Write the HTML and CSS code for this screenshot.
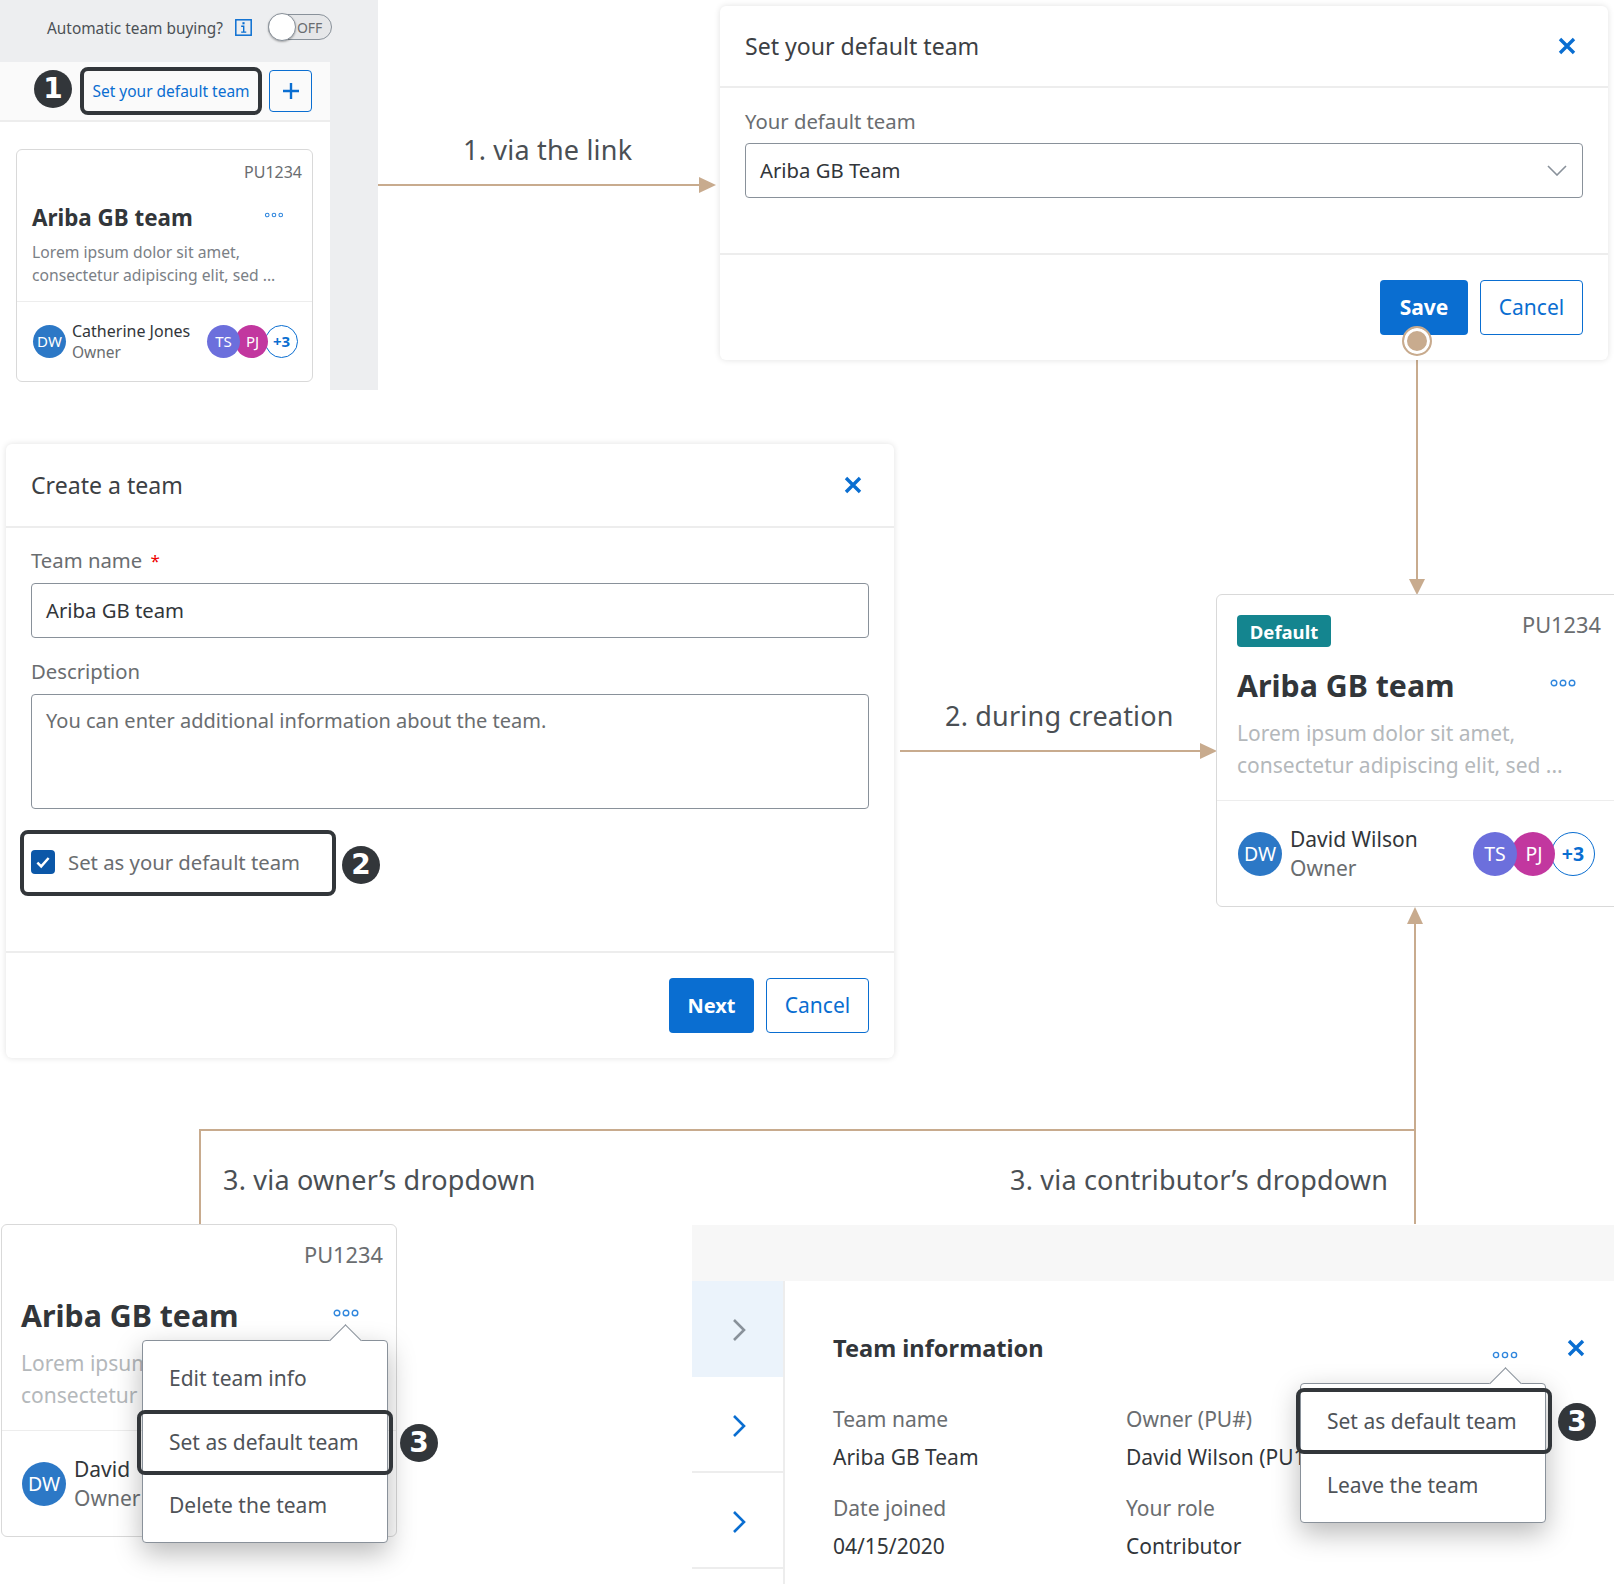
FILE: index.html
```html
<!DOCTYPE html>
<html lang="en">
<head>
<meta charset="utf-8">
<title>Setting a default team</title>
<link rel="stylesheet" href="styles.css">
</head>
<body>
<div class="canvas">

  <!-- connectors -->
  <div class="line h arrow-line-1"></div><div class="tip tip-right tip-1"></div>
  <div class="line h arrow-line-2"></div><div class="tip tip-right tip-2"></div>
  <div class="line v save-line"></div><div class="tip tip-down tip-save"></div>
  <div class="line h join-h"></div>
  <div class="line v join-left"></div>
  <div class="line v join-right"></div><div class="tip tip-up tip-join"></div>
  <p class="flow-label label-1">1. via the link</p>
  <p class="flow-label label-2">2. during creation</p>
  <p class="flow-label label-3a">3. via owner’s dropdown</p>
  <p class="flow-label label-3b">3. via contributor’s dropdown</p>

  <!-- panel 1: team list -->
  <section class="list-panel">
    <div class="auto-row">
      <span>Automatic team buying?</span>
      <svg class="info" viewBox="0 0 16 16"><rect x=".75" y=".75" width="14.5" height="14.5" fill="none" stroke="#0a6ed1" stroke-width="1.4"/><rect x="7" y="3" width="2" height="2" fill="#0a6ed1"/><path d="M5.8 6.8H8.2V12.2M5.8 12.4h4.8" fill="none" stroke="#0a6ed1" stroke-width="1.3"/></svg>
      <span class="toggle"><span class="knob"></span><span class="off">OFF</span></span>
    </div>
    <div class="list-body">
      <div class="list-toolbar">
        <span class="num num-1">1</span>
        <span class="link-box">Set your default team</span>
        <span class="plus"><svg viewBox="0 0 18 18"><path d="M9 1v16M1 9h16" stroke="#0a6ed1" stroke-width="2.4" fill="none"/></svg></span>
      </div>
      <article class="card card-s">
        <div class="card-id">PU1234</div>
        <div class="card-title-row"><h3>Ariba GB team</h3><svg class="dots" viewBox="0 0 26 8"><circle cx="4" cy="4" r="2.4"/><circle cx="13" cy="4" r="2.4"/><circle cx="22" cy="4" r="2.4"/></svg></div>
        <p class="card-desc">Lorem ipsum dolor sit amet,<br>consectetur adipiscing elit, sed ...</p>
        <div class="card-foot">
          <span class="av av-dw">DW</span>
          <div class="who"><span class="who-name">Catherine Jones</span><span class="who-role">Owner</span></div>
          <div class="team"><span class="av av-ts">TS</span><span class="av av-pj">PJ</span><span class="av av-more">+3</span></div>
        </div>
      </article>
    </div>
  </section>

  <!-- dialog 1 -->
  <section class="dialog dialog-default">
    <header class="dlg-head"><h2>Set your default team</h2><svg class="close" viewBox="0 0 18 18"><path d="M2 2l14 14M16 2L2 16"/></svg></header>
    <div class="dlg-body body-default">
      <label class="fld-label">Your default team</label>
      <div class="field select-field">Ariba GB Team<svg class="chev-down" viewBox="0 0 20 11"><path d="M1 1l9 9 9-9"/></svg></div>
    </div>
    <footer class="dlg-foot"><span class="btn btn-primary btn-save">Save</span><span class="btn btn-ghost">Cancel</span></footer>
  </section>
  <span class="start-dot"></span>

  <!-- dialog 2 -->
  <section class="dialog dialog-create">
    <header class="dlg-head"><h2>Create a team</h2><svg class="close" viewBox="0 0 18 18"><path d="M2 2l14 14M16 2L2 16"/></svg></header>
    <div class="dlg-body body-create">
      <label class="fld-label">Team name <em>*</em></label>
      <div class="field">Ariba GB team</div>
      <label class="fld-label second">Description</label>
      <div class="field area">You can enter additional information about the team.</div>
      <div class="check-row">
        <span class="check"><svg viewBox="0 0 16 16"><path d="M3 8.5l3.4 3.4L13 4.4" fill="none" stroke="#fff" stroke-width="2.2"/></svg></span>
        <span>Set as your default team</span>
      </div>
    </div>
    <footer class="dlg-foot"><span class="btn btn-primary btn-next">Next</span><span class="btn btn-ghost">Cancel</span></footer>
  </section>
  <div class="hl hl-check"></div>
  <span class="num num-2">2</span>

  <!-- big card: result -->
  <article class="card card-l card-result">
    <div class="card-top"><span class="badge">Default</span><span class="card-id">PU1234</span></div>
    <div class="card-title-row"><h3>Ariba GB team</h3><svg class="dots" viewBox="0 0 26 8"><circle cx="4" cy="4" r="2.8"/><circle cx="13" cy="4" r="2.8"/><circle cx="22" cy="4" r="2.8"/></svg></div>
    <p class="card-desc">Lorem ipsum dolor sit amet,<br>consectetur adipiscing elit, sed ...</p>
    <div class="card-foot">
      <span class="av av-dw">DW</span>
      <div class="who"><span class="who-name">David Wilson</span><span class="who-role">Owner</span></div>
      <div class="team"><span class="av av-ts">TS</span><span class="av av-pj">PJ</span><span class="av av-more">+3</span></div>
    </div>
  </article>

  <!-- big card: owner dropdown -->
  <article class="card card-l card-owner">
    <div class="card-top end"><span class="card-id">PU1234</span></div>
    <div class="card-title-row"><h3>Ariba GB team</h3><svg class="dots" viewBox="0 0 26 8"><circle cx="4" cy="4" r="2.8"/><circle cx="13" cy="4" r="2.8"/><circle cx="22" cy="4" r="2.8"/></svg></div>
    <p class="card-desc">Lorem ipsum<br>consectetur</p>
    <div class="card-foot">
      <span class="av av-dw">DW</span>
      <div class="who"><span class="who-name">David</span><span class="who-role">Owner</span></div>
    </div>
  </article>
  <div class="menu menu-owner">
    <span class="menu-tip"></span>
    <div class="menu-item">Edit team info</div>
    <div class="menu-item">Set as default team</div>
    <div class="menu-item">Delete the team</div>
  </div>
  <div class="hl hl-owner"></div>
  <span class="num num-3a">3</span>

  <!-- team info -->
  <section class="info-panel">
    <div class="info-band"></div>
    <div class="info-main">
      <div class="info-rail">
        <div class="rail-row active"><svg viewBox="0 0 14 24"><path d="M2 2l10 10L2 22" stroke="#89919a"/></svg></div>
        <div class="rail-row"><svg viewBox="0 0 14 24"><path d="M2 2l10 10L2 22" stroke="#0a6ed1"/></svg></div>
        <div class="rail-row"><svg viewBox="0 0 14 24"><path d="M2 2l10 10L2 22" stroke="#0a6ed1"/></svg></div>
      </div>
      <div class="info-content">
        <div class="info-head"><h3>Team information</h3><svg class="dots" viewBox="0 0 26 8"><circle cx="4" cy="4" r="2.6"/><circle cx="13" cy="4" r="2.6"/><circle cx="22" cy="4" r="2.6"/></svg><svg class="close" viewBox="0 0 18 18"><path d="M2 2l14 14M16 2L2 16"/></svg></div>
        <dl class="info-grid">
          <div><dt>Team name</dt><dd>Ariba GB Team</dd></div>
          <div><dt>Owner (PU#)</dt><dd>David Wilson (PU1234)</dd></div>
          <div><dt>Date joined</dt><dd>04/15/2020</dd></div>
          <div><dt>Your role</dt><dd>Contributor</dd></div>
        </dl>
      </div>
    </div>
  </section>
  <div class="menu menu-contrib">
    <span class="menu-tip"></span>
    <div class="menu-item">Set as default team</div>
    <div class="menu-item">Leave the team</div>
  </div>
  <div class="hl hl-contrib"></div>
  <span class="num num-3b">3</span>

</div>
</body>
</html>
```
FILE: styles.css
```css
* { box-sizing: border-box; }
html, body { margin: 0; padding: 0; background: #fff; }
body { font-family: "Noto Sans", "Open Sans", sans-serif; color: #32363a; }
h2, h3, p, dl, dd, dt { margin: 0; font-weight: 400; }
.canvas { position: relative; width: 1614px; height: 1584px; overflow: hidden; }

/* connectors */
.line { position: absolute; background: #c8ab8e; }
.line.h { height: 2px; }
.line.v { width: 2px; }
.arrow-line-1 { left: 378px; top: 184px; width: 325px; }
.arrow-line-2 { left: 900px; top: 750px; width: 305px; }
.save-line { left: 1416px; top: 355px; height: 230px; }
.join-h { left: 199px; top: 1129px; width: 1217px; }
.join-left { left: 199px; top: 1129px; height: 96px; }
.join-right { left: 1414px; top: 920px; height: 304px; }
.tip { position: absolute; width: 0; height: 0; border-style: solid; border-color: transparent; }
.tip-right { border-width: 8px 0 8px 17px; border-left-color: #c8ab8e; }
.tip-down { border-width: 16px 8px 0 8px; border-top-color: #c8ab8e; }
.tip-up { border-width: 0 8px 17px 8px; border-bottom-color: #c8ab8e; }
.tip-1 { left: 699px; top: 177px; }
.tip-2 { left: 1200px; top: 743px; }
.tip-save { left: 1409px; top: 579px; }
.tip-join { left: 1407px; top: 907px; }
.flow-label { position: absolute; font-size: 27px; line-height: 36px; color: #4a4f54; white-space: nowrap; letter-spacing: .2px; }
.label-1 { left: 463px; top: 132px; }
.label-2 { left: 945px; top: 698px; }
.label-3a { left: 223px; top: 1162px; }
.label-3b { left: 1010px; top: 1162px; }

/* numbered markers and highlights */
.num { position: absolute; width: 38px; height: 38px; border-radius: 50%; background: #32363a; color: #fff; font-family: "DejaVu Sans", "Noto Sans", sans-serif; font-weight: 700; font-size: 28px; line-height: 38px; text-align: center; }
.num-1 { left: 34px; top: 70px; }
.num-2 { left: 342px; top: 846px; }
.num-3a { left: 400px; top: 1424px; }
.num-3b { left: 1558px; top: 1403px; }
.hl { position: absolute; border: 4px solid #32363a; border-radius: 8px; }
.hl-check { left: 20px; top: 830px; width: 316px; height: 66px; }
.hl-owner { left: 137px; top: 1410px; width: 256px; height: 65px; }
.hl-contrib { left: 1296px; top: 1388px; width: 256px; height: 66px; }

/* list panel */
.list-panel { position: absolute; left: 0; top: 0; width: 378px; height: 390px; background: #edeef0; }
.auto-row { height: 62px; padding: 14px 47px 0; display: flex; align-items: flex-start; font-size: 15.4px; line-height: 29px; color: #4b5055; white-space: nowrap; }
.info { width: 17px; height: 17px; margin: 5px 0 0 12px; flex: none; }
.toggle { position: relative; margin: 0 0 0 16px; width: 64px; height: 26px; border: 1px solid #89919a; border-radius: 13px; background: #e6e7e9; flex: none; }
.knob { position: absolute; left: -1px; top: -2px; width: 28px; height: 28px; border-radius: 50%; background: #fff; border: 1px solid #89919a; box-shadow: 0 1px 2px rgba(0,0,0,.3); }
.off { position: absolute; left: 28px; top: 0; font-size: 14px; line-height: 25px; color: #6a6d70; }
.list-body { width: 330px; height: 328px; background: #fff; }
.list-toolbar { height: 60px; background: #fafafa; border-bottom: 2px solid #ededed; display: flex; align-items: center; justify-content: flex-end; padding: 0 18px 0 0; gap: 7px; }
.list-toolbar .num { position: absolute; top: 70px; }
.link-box { width: 182px; height: 48px; border: 4px solid #32363a; border-radius: 8px; font-size: 15.5px; line-height: 40px; text-align: center; color: #0a6ed1; background: #fafafa; white-space: nowrap; }
.plus { width: 43px; height: 42px; border: 1.5px solid #0a6ed1; border-radius: 4px; display: flex; align-items: center; justify-content: center; }
.plus svg { width: 18px; height: 18px; }

/* cards */
.card { background: #fff; border: 1.5px solid #d9d9d9; border-radius: 6px; }
.card h3 { font-weight: 700; white-space: nowrap; }
.card-id { color: #6a6d70; white-space: nowrap; }
.card-title-row { display: flex; justify-content: space-between; align-items: center; }
.dots { fill: none; stroke: #2f86dd; stroke-width: 1.4; flex: none; }
.card-desc { white-space: nowrap; }
.card-foot { display: flex; align-items: center; border-top: 1px solid #ededed; }
.who { display: flex; flex-direction: column; white-space: nowrap; }
.who-name { color: #32363a; }
.who-role { color: #6a6d70; }
.team { display: flex; margin-left: auto; }
.av { display: flex; align-items: center; justify-content: center; border-radius: 50%; flex: none; color: #fff; }
.av-dw { background: #2c78c6; }
.av-ts { background: #6c6fdc; position: relative; z-index: 2; }
.av-pj { background: #c2379f; position: relative; z-index: 1; }
.av-more { background: #fff; border: 1.5px solid #0a6ed1; color: #0a6ed1; font-weight: 700; }

.card-s { width: 297px; height: 233px; margin: 27px 0 0 16px; padding-top: 12px; }
.card-s .card-id { text-align: right; padding-right: 10px; font-size: 16px; line-height: 20px; }
.card-s .card-title-row { margin: 21px 0 0 15px; padding-right: 28px; height: 30px; }
.card-s h3 { font-size: 22.4px; line-height: 30px; }
.card-s .dots { width: 20px; height: 6px; margin-top: -7px; }
.card-s .card-desc { margin: 8px 0 0 15px; font-size: 15.7px; line-height: 23px; color: #7b8086; }
.card-s .card-foot { margin-top: 14px; height: 78px; padding: 1px 14px 0 16px; gap: 6px; }
.card-s .who { margin-top: 1px; }
.card-s .av { width: 33px; height: 33px; font-size: 15px; }
.card-s .who-name { font-size: 16px; line-height: 21px; }
.card-s .who-role { font-size: 15.5px; line-height: 21px; }
.card-s .av-pj { margin-left: -5px; padding-left: 2px; }
.card-s .av-more { margin-left: -3px; }

.card-l { position: absolute; height: 313px; padding: 0 0 0 20px; }
.card-result { left: 1216px; top: 594px; width: 420px; }
.card-owner { left: 1px; top: 1224px; width: 396px; padding-left: 19px; }
.card-top { display: flex; justify-content: space-between; height: 63px; padding-top: 20px; }
.card-top.end { justify-content: flex-end; }
.badge { width: 94px; height: 32px; background: #14858f; border-radius: 4px; color: #fff; font-weight: 700; font-size: 18.5px; line-height: 34px; text-align: center; }
.card-l .card-id { font-size: 21.8px; line-height: 20px; }
.card-result .card-id { margin-right: 34px; }
.card-owner .card-id { margin-right: 13px; }
.card-l .card-title-row { height: 46px; margin-top: 5px; }
.card-l h3 { font-size: 30.3px; line-height: 46px; }
.card-result .card-title-row { padding-right: 59px; }
.card-owner .card-title-row { padding-right: 37px; }
.card-l .dots { width: 26px; height: 8px; margin-top: -6px; }
.card-l .card-desc { margin-top: 8px; font-size: 21px; line-height: 32px; color: #b4b8bb; }
.card-l .card-foot { margin: 19px 0 0 -20px; height: 106px; padding-left: 21px; gap: 8px; }
.card-owner .card-foot { margin-left: -19px; padding-left: 20px; }
.card-result .card-foot { padding-right: 40px; }
.card-l .av { width: 44px; height: 44px; font-size: 19.5px; }
.card-l .who-name { font-size: 21px; line-height: 29px; }
.card-l .who-role { font-size: 21px; line-height: 29px; }
.card-l .av-pj { margin-left: -6px; padding-left: 2px; }
.card-l .av-more { margin-left: -4px; }

/* dialogs */
.dialog { position: absolute; background: #fff; border-radius: 6px; box-shadow: 0 0 6px rgba(0,0,0,.12); display: flex; flex-direction: column; }
.dialog-default { left: 720px; top: 6px; width: 888px; height: 354px; }
.dialog-create { left: 6px; top: 444px; width: 888px; height: 614px; }
.dlg-head { height: 82px; flex: none; display: flex; align-items: center; justify-content: space-between; padding: 0 32px 0 25px; border-bottom: 2px solid #ededed; }
.dialog-create .dlg-head { height: 84px; padding-right: 32px; }
.dlg-head h2 { font-size: 23.1px; color: #3c4044; }
.close { width: 18px; height: 18px; fill: none; stroke: #0a6ed1; stroke-width: 3.4; flex: none; }
.dlg-body { flex: 1; padding: 0 25px; }
.body-default { padding-top: 17px; }
.body-create { padding-top: 16px; }
.fld-label { display: block; font-size: 20.3px; line-height: 32px; color: #6a6d70; }
.fld-label em { color: #e00; font-style: normal; font-size: 17px; margin-left: 3px; vertical-align: 1px; }
.fld-label.second { margin-top: 17px; }
.field { position: relative; height: 55px; margin-top: 6px; padding: 0 14px; border: 1.5px solid #89919a; border-radius: 4px; font-size: 20.3px; line-height: 52px; color: #32363a; }
.select-field { margin-top: 6px; }
.field.area { height: 115px; margin-top: 7px; color: #6a6d70; font-size: 20px; line-height: 52px; }
.chev-down { position: absolute; right: 15px; top: 21px; width: 20px; height: 11px; fill: none; stroke: #89919a; stroke-width: 1.6; }
.check-row { display: flex; align-items: center; gap: 13px; margin-top: 37px; font-size: 20.3px; line-height: 32px; color: #6a6d70; }
.check { width: 24px; height: 24px; border-radius: 4px; background: #0b57a8; display: flex; align-items: center; justify-content: center; }
.check svg { width: 18px; height: 18px; }
.dlg-foot { height: 107px; flex: none; border-top: 2px solid #ededed; display: flex; justify-content: flex-end; align-items: flex-start; gap: 12px; padding: 25px 25px 0 0; }
.btn { height: 55px; border-radius: 4px; font-size: 21px; line-height: 55px; text-align: center; }
.btn-primary { background: #0a6ed1; color: #fff; font-weight: 700; }
.btn-save { width: 88px; }
.btn-next { width: 85px; font-size: 20px; }
.btn-ghost { width: 103px; border: 1.5px solid #0a6ed1; color: #0a6ed1; background: #fff; line-height: 53px; }
.start-dot { position: absolute; left: 1402px; top: 326px; width: 30px; height: 30px; border-radius: 50%; background: #c8ab8e; border: 2px solid #c8ab8e; box-shadow: inset 0 0 0 3px #fff; }

/* menus */
.menu { position: absolute; width: 246px; background: #fff; border: 1.5px solid #89919a; border-radius: 4px; box-shadow: 0 10px 28px rgba(0,0,0,.28); font-size: 21px; color: #4f5358; }
.menu-owner { left: 142px; top: 1340px; height: 203px; padding-top: 6px; }
.menu-contrib { left: 1300px; top: 1383px; height: 140px; padding-top: 6px; }
.menu-item { height: 63.5px; line-height: 62px; padding-left: 26px; white-space: nowrap; }
.menu-tip { position: absolute; top: -12px; width: 23px; height: 23px; background: #fff; border-left: 1.5px solid #89919a; border-top: 1.5px solid #89919a; transform: rotate(45deg); }
.menu-owner .menu-tip { left: 191px; }
.menu-contrib .menu-tip { left: 193px; }

/* team info panel */
.info-panel { position: absolute; left: 692px; top: 1225px; width: 922px; height: 359px; display: flex; flex-direction: column; }
.info-band { height: 56px; flex: none; background: #f7f7f7; }
.info-main { flex: 1; display: flex; }
.info-rail { width: 93px; flex: none; border-right: 2px solid #ededed; }
.rail-row { height: 96px; display: flex; align-items: center; justify-content: center; border-bottom: 2px solid #ededed; padding: 4px 0 0 2px; }
.rail-row.active { background: #ebf3fb; border-bottom-color: #ebf3fb; }
.rail-row svg { width: 14px; height: 24px; fill: none; stroke-width: 2.6; }
.info-content { flex: 1; padding: 48px 0 0 48px; overflow: hidden; }
.info-head { display: flex; align-items: center; height: 38px; padding-right: 29px; }
.info-head h3 { font-size: 23.6px; font-weight: 700; color: #32363a; }
.info-head .dots { width: 26px; height: 8px; margin: 14px 0 0 auto; }
.info-head .close { margin-left: 49px; margin-top: 0; }
.info-grid { display: grid; grid-template-columns: 293px auto; row-gap: 13px; margin-top: 33px; font-size: 21px; line-height: 38px; white-space: nowrap; }
.info-grid dt { color: #6a6d70; }
.info-grid dd { color: #32363a; }
```
